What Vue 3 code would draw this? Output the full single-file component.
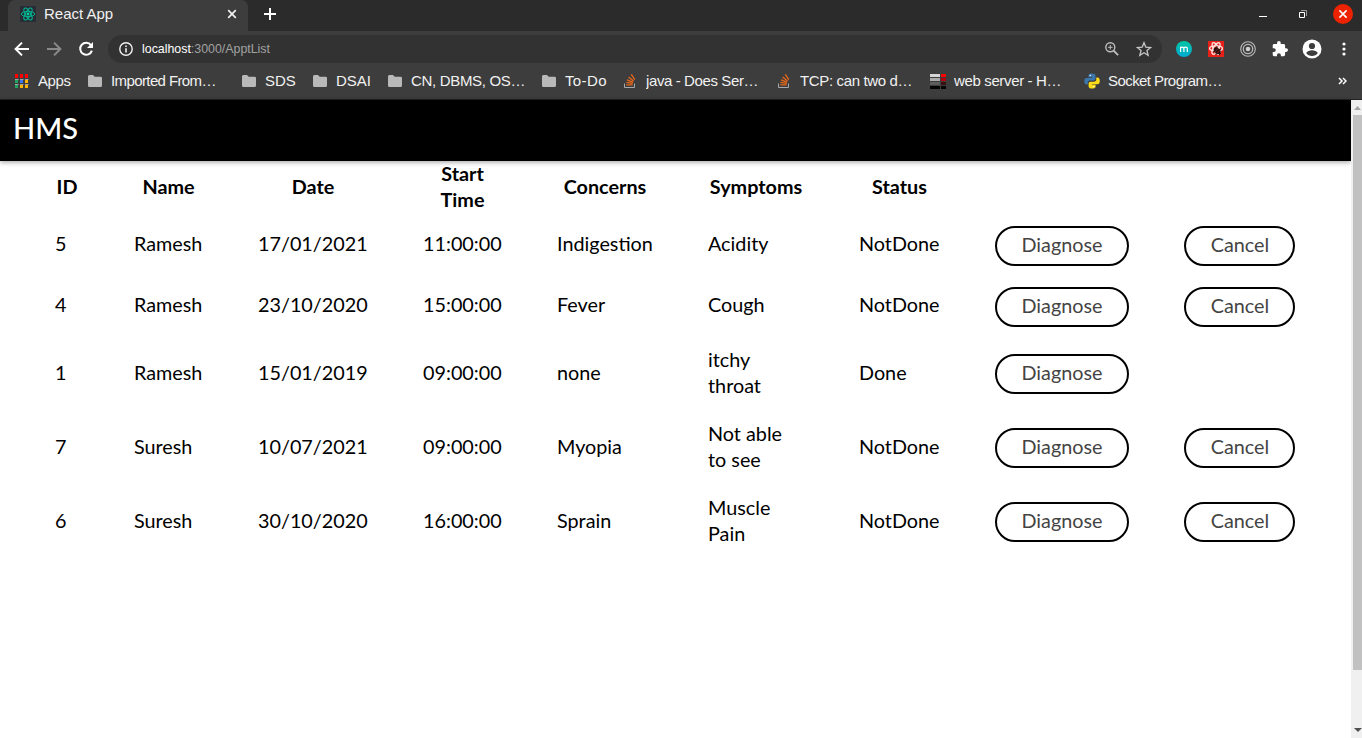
<script setup>
const bookmarks = [
  { icon: 'folder', text: 'Imported From…', w: 154, tl: 105.5 },
  { icon: 'folder', text: 'SDS', w: 71, tl: 30.8 },
  { icon: 'folder', text: 'DSAI', w: 75, tl: 35 },
  { icon: 'folder', text: 'CN, DBMS, OS…', w: 154, tl: 114.5 },
  { icon: 'folder', text: 'To-Do', w: 81, tl: 41.5 },
  { icon: 'stack', text: 'java - Does Ser…', w: 154, tl: 112.5 },
  { icon: 'stack', text: 'TCP: can two d…', w: 154, tl: 112.5 },
  { icon: 'bars', text: 'web server - H…', w: 154, tl: 107.5 },
  { icon: 'python', text: 'Socket Program…', w: 154, tl: 114.5 }
]
const headers = ['ID', 'Name', 'Date', 'Start Time', 'Concerns', 'Symptoms', 'Status', '', '']
const rows = [
  { cells: ['5', 'Ramesh', '17/01/2021', '11:00:00', 'Indigestion', 'Acidity', 'NotDone'], cancel: true },
  { cells: ['4', 'Ramesh', '23/10/2020', '15:00:00', 'Fever', 'Cough', 'NotDone'], cancel: true },
  { cells: ['1', 'Ramesh', '15/01/2019', '09:00:00', 'none', 'itchy throat', 'Done'], cancel: false, tall: true },
  { cells: ['7', 'Suresh', '10/07/2021', '09:00:00', 'Myopia', 'Not able to see', 'NotDone'], cancel: true, tall: true },
  { cells: ['6', 'Suresh', '30/10/2020', '16:00:00', 'Sprain', 'Muscle Pain', 'NotDone'], cancel: true, tall: true }
]
const appDots = ['#f00', '#f00', '#f00', '#1fa463', '#3b78f0', '#ffb300', '#1fa463', '#ffb300', '#ffb300']
</script>

<template>
  <div class="window">
    <header class="tabs">
      <div class="tab">
        <svg class="fav" width="16" height="16" viewBox="0 0 16 16">
          <rect width="16" height="16" fill="#282c34" />
          <g fill="none" stroke="#00b894" stroke-width="1">
            <ellipse cx="8" cy="8" rx="6.7" ry="2.6" />
            <ellipse cx="8" cy="8" rx="6.7" ry="2.6" transform="rotate(60 8 8)" />
            <ellipse cx="8" cy="8" rx="6.7" ry="2.6" transform="rotate(120 8 8)" />
          </g>
          <circle cx="8" cy="8" r="1.4" fill="#00d8a4" />
        </svg>
        <span class="tab-title">React App</span>
        <svg class="tab-close" width="10" height="10" viewBox="0 0 10 10"><path d="M1.2 1.2l7.6 7.6M8.8 1.2L1.2 8.8" stroke="#f1f1f1" stroke-width="1.7" /></svg>
      </div>
      <svg class="plus" width="12" height="12" viewBox="0 0 12 12"><path d="M6 0v12M0 6h12" stroke="#fff" stroke-width="2" /></svg>
      <div class="win-controls">
        <svg width="8" height="12" viewBox="0 0 8 12"><path d="M0 8.5h8" stroke="#fff" /></svg>
        <svg width="8" height="8" viewBox="0 0 8 8"><path d="M2 .5h5.5V6" fill="none" stroke="#999" /><path d="M.5 2.500h5v5h-5z" fill="none" stroke="#fff" /></svg>
        <svg width="20" height="20" viewBox="0 0 20 20"><circle cx="10" cy="10" r="10" fill="#ed2200" /><path d="M6.4 6.4l7.2 7.2M13.6 6.4l-7.2 7.2" stroke="#fff" stroke-width="1.6" /></svg>
      </div>
    </header>

    <div class="toolbar">
      <svg class="back" width="16" height="16" viewBox="0 0 16 16"><path d="M15 8H2.2M8 1.6L1.6 8 8 14.4" fill="none" stroke="#fff" stroke-width="2" /></svg>
      <svg class="forward" width="16" height="16" viewBox="0 0 16 16"><path d="M1 8h12.8M8 1.6L14.4 8 8 14.4" fill="none" stroke="#8a8a8a" stroke-width="2" /></svg>
      <svg class="reload" width="16" height="16" viewBox="0 0 16 16"><path d="M13 4.1A6 6 0 1 0 13.9 9.6" fill="none" stroke="#fff" stroke-width="2" /><path d="M15 1v6H9z" fill="#fff" /></svg>
      <div class="omnibox">
        <svg class="info" width="14" height="14" viewBox="0 0 14 14"><circle cx="7" cy="7" r="6.2" fill="none" stroke="#f1f1f1" stroke-width="1.4" /><path d="M7 6.2v4.4M7 3.4v1.6" stroke="#f1f1f1" stroke-width="1.6" /></svg>
        <svg class="url" width="132" height="18"><text x="0" y="13" font-size="13" textLength="128" lengthAdjust="spacingAndGlyphs"><tspan fill="#fff">localhost</tspan><tspan fill="#a2a2a2">:3000/ApptList</tspan></text></svg>
        <svg class="lens" width="14" height="14" viewBox="0 0 14 14"><circle cx="5.3" cy="5.3" r="4.5" fill="none" stroke="#bcbcbc" stroke-width="1.4" /><path d="M8.5 8.5l4.6 4.6" stroke="#bcbcbc" stroke-width="1.8" /><path d="M5.3 3v4.6M3 5.3h4.6" stroke="#bcbcbc" /></svg>
        <svg class="star" width="16" height="16" viewBox="0 0 14 14"><path d="M7 1.5l1.6 3.9 4.2.3-3.2 2.7 1 4.1L7 10.3l-3.6 2.2 1-4.1L1.2 5.7l4.2-.3z" fill="none" stroke="#c4c4c4" stroke-width="1.2" /></svg>
      </div>
      <svg class="ext-m" width="16" height="16" viewBox="0 0 16 16">
        <defs><linearGradient id="mg" x1="0" y1="0" x2="0" y2="1"><stop offset="0" stop-color="#00c5a2" /><stop offset="1" stop-color="#00a9d4" /></linearGradient></defs>
        <circle cx="8" cy="8" r="8" fill="url(#mg)" /><path d="M4.6 11V5.7M4.6 7.6q0-1.5 1.6-1.5T7.9 7.6V11M7.9 7.6q0-1.5 1.7-1.5t1.7 1.5V11" fill="none" stroke="#fff" stroke-width="1.2" />
      </svg>
      <svg class="ext-bug" width="16" height="16" viewBox="0 0 16 16">
        <rect width="16" height="16" fill="#e8201a" />
        <g fill="none" stroke="#ffdcd9" stroke-width="1.4"><ellipse cx="8" cy="7.5" rx="6.4" ry="2.6" /><ellipse cx="8" cy="7.5" rx="6.4" ry="2.6" transform="rotate(60 8 7.5)" /><ellipse cx="8" cy="7.5" rx="6.4" ry="2.6" transform="rotate(120 8 7.5)" /></g>
        <ellipse cx="9.2" cy="9.8" rx="4" ry="2.7" transform="rotate(42 9.2 9.8)" fill="#28120f" />
        <path d="M5 11l8-3M8 14l1-9M11 14l2-2" stroke="#28120f" /><path d="M7.2 10.5l3-3M9.3 12l2.5-2.5" stroke="#b52620" stroke-width=".7" />
      </svg>
      <svg class="ext-rings" width="16" height="16" viewBox="0 0 16 16"><circle cx="8" cy="8" r="7.3" fill="none" stroke="#bababa" stroke-width="1.1" /><circle cx="8" cy="8" r="4.7" fill="none" stroke="#bababa" stroke-width="1.3" /><circle cx="8" cy="8" r="2.3" fill="#d0d0d0" /></svg>
      <svg class="puzzle" width="16" height="16" viewBox="1 1 22 22"><path fill="#fff" d="M20.5 11H19V7c0-1.1-.9-2-2-2h-4V3.5a2.5 2.5 0 0 0-5 0V5H4c-1.1 0-2 .9-2 2v3.8h1.5a2.7 2.7 0 0 1 0 5.4H2V20c0 1.1.9 2 2 2h3.8v-1.5a2.7 2.7 0 0 1 5.4 0V22H17c1.100 0 2-.9 2-2v-4h1.500a2.500 2.500 0 0 0 0-5z" /></svg>
      <svg class="user" width="20" height="20" viewBox="0 0 20 20"><circle cx="10" cy="10" r="9.500" fill="#fff" /><circle cx="10" cy="7" r="3.100" fill="#3d3d3d" /><path d="M4.200 14c1-2 3.500-2.800 5.800-2.800s4.800.8 5.800 2.800a7 7 0 0 1-11.600 0z" fill="#3d3d3d" /></svg>
      <svg class="dots" width="4" height="14" viewBox="0 0 4 14"><circle cx="2" cy="2" r="1.600" fill="#fff" /><circle cx="2" cy="7" r="1.600" fill="#fff" /><circle cx="2" cy="12" r="1.600" fill="#fff" /></svg>
    </div>

    <nav class="bookmarks">
      <div class="mark apps">
        <div class="app-grid"><i v-for="(c, i) in appDots" :key="i" :style="{ background: c }"></i></div>
        <svg class="label" width="36" height="20"><text x="0" y="15" font-size="15" textLength="33">Apps</text></svg>
      </div>
      <div v-for="b in bookmarks" :key="b.text" class="mark" :style="{ width: b.w + 'px' }">
        <svg v-if="b.icon === 'folder'" class="icon" width="16" height="16" viewBox="0 0 16 16"><path d="M1 3.500Q1 2 2.400 2H6l1.700 1.700h5.900Q15 3.700 15 5v7.500Q15 14 13.600 14H2.400Q1 14 1 12.500z" fill="#b9b9b9" /></svg>
        <svg v-else-if="b.icon === 'stack'" class="icon" width="16" height="16" viewBox="0 0 16 16">
          <path d="M2.500 10.500v4h10v-4" fill="none" stroke="#a7a9ac" />
          <path d="M4.300 12.500h6.400M4.400 10l6.300 1.100M5 7.500l6 2.400M6.600 4.700l5 4M9.300 2.100l3.500 5.300" transform="translate(0 -.7)" stroke="#e8681a" stroke-width="1.300" />
        </svg>
        <svg v-else-if="b.icon === 'bars'" class="icon" width="16" height="16" viewBox="0 -1 16 16">
          <path d="M0 0h10v3H0z" fill="#d6d6d6" /><path d="M0 4h10v3H0z" fill="#aaa" /><path d="M0 8h10v3H0z" fill="#5d5d5d" /><path d="M0 12h10v3H0zM11 12h5v3h-5z" fill="#050505" />
          <path d="M11 0h5v3h-5z" fill="#f00" /><path d="M11 4h5v3h-5z" fill="#b2000b" /><path d="M11 8h5v3h-5z" fill="#3b1013" />
        </svg>
        <svg v-else class="icon" width="16" height="16" viewBox="0 0 16 16">
          <path fill="#3b77ad" d="M7.900.5C4.700.5 4.500 1.800 4.500 2.800v1.500h3.700v.6H2.600C.9 4.900.3 6.400.3 8.200s.8 3.300 2.200 3.300h1.300V9.600c0-1.300 1-2.200 2.300-2.200h3.500c1.100 0 1.900-.8 1.900-1.900V2.800C11.500 1.300 10.200.5 7.900.5z" />
          <path fill="#ffdc1a" d="M8.200 15.600c3.200 0 3.400-1.300 3.400-2.300v-1.500H7.900v-.6h5.600c1.700 0 2.300-1.500 2.300-3.300s-.8-3.300-2.200-3.300h-1.300v1.900c0 1.300-1 2.200-2.300 2.200H6.500c-1.100 0-1.900.8-1.900 1.900v2.700c0 1.500 1.300 2.300 3.600 2.300z" />
          <circle cx="6.300" cy="2.500" r=".7" fill="#fff" /><circle cx="9.800" cy="13.600" r=".7" fill="#fff" />
        </svg>
        <svg class="label" :width="b.tl + 4" height="20"><text x="0" y="15" font-size="15" :textLength="b.tl">{{ b.text }}</text></svg>
      </div>
      <svg class="more" width="9" height="8" viewBox="0 0 9 8"><path d="M1 1l3 3-3 3M5 1l3 3-3 3" fill="none" stroke="#fff" stroke-width="1.500" /></svg>
    </nav>

    <main class="viewport">
      <section class="page">
        <div class="brand">HMS</div>
        <div class="table">
          <div class="row head"><div v-for="(h, i) in headers" :key="i" class="cell"><b>{{ h }}</b></div></div>
          <div v-for="r in rows" :key="r.cells[0]" class="row" :class="{ tall: r.tall }">
            <div v-for="(c, i) in r.cells" :key="i" class="cell" :class="{ wrap: i === 5 }">{{ c }}</div>
            <div class="action"><button>Diagnose</button></div>
            <div class="action"><button v-if="r.cancel" class="cancel">Cancel</button></div>
          </div>
        </div>
      </section>
      <aside class="scrollbar">
        <svg width="11" height="15" viewBox="0 0 11 15"><path d="M3 10h7L6.500 6z" fill="#a3a3a3" /></svg>
        <div class="thumb"></div>
        <svg class="down" width="11" height="15" viewBox="0 0 11 15"><path d="M3 5h8L7 9z" fill="#505050" /></svg>
      </aside>
    </main>
  </div>
</template>

<style>
body { margin: 0; overflow: hidden; background: #fff; }
</style>

<style scoped>
* { box-sizing: border-box; }
svg { display: block; flex: none; }
.window { width: 1362px; height: 738px; display: flex; flex-direction: column; overflow: hidden; font-family: "Liberation Sans", Arial, sans-serif; }
.tabs { height: 31px; flex: none; background: #2b2b2b; display: flex; align-items: flex-start; padding-left: 8px; }
.tab { width: 240px; height: 31px; background: #3d3d3d; border-radius: 7px 7px 0 0; display: flex; align-items: center; padding: 0 11px 3px 12px; }
.tab-title { flex: 1; margin-left: 8px; color: #f1f1f1; font-size: 15px; line-height: 20px; }
.plus { margin: 8px 0 0 16px; }
.win-controls { margin-left: auto; padding: 4px 9px 0 0; display: flex; align-items: center; }
.win-controls svg + svg { margin-left: 32px; }
.win-controls svg:last-child { margin-left: 26px; }
.toolbar { height: 36px; flex: none; background: #3d3d3d; display: flex; align-items: center; padding-left: 14px; }
.forward, .reload { margin-left: 16px; }
.omnibox { width: 1054px; height: 28px; margin-left: 14px; border-radius: 14px; background: #323232; display: flex; align-items: center; padding: 0 10px 0 11px; }
.url { margin-left: 9px; }
.lens { margin-left: auto; }
.star { margin-left: 17px; }
.ext-m { margin-left: 14px; }
.ext-bug, .ext-rings, .puzzle { margin-left: 16px; }
.user { margin-left: 14px; }
.dots { margin-left: 20px; }
.bookmarks { height: 33px; flex: none; background: #3d3d3d; border-bottom: 1px solid #242424; display: flex; align-items: center; padding: 0 0 4px 14px; }
.mark { flex: none; display: flex; align-items: center; }
.apps { width: 73px; }
.app-grid { width: 16px; display: grid; grid-template-columns: repeat(3, 4px); gap: 1px; padding-left: 1px; }
.app-grid i { height: 4px; border-top: 1px solid #a2a2a2; border-right: 1px solid #3d3d3d; }
.app-grid i:nth-child(-n + 3) { border-top: 0; }
.label { margin-left: 8px; }
.label text { fill: #f1f1f1; }
.more { margin: 0 15px 0 auto; }
.viewport { flex: 1; min-height: 0; display: flex; }
.page { width: 1351px; background: #fff; font-family: Lato, sans-serif; color: #000; }
.brand { height: 61px; padding: 8px 0 0 13px; background: #000; color: #fff; font-size: 29px; font-weight: 500; line-height: 40px; box-shadow: 0 1px 5px rgba(0, 0, 0, .4); }
.table { padding-left: 55px; font-size: 19.8px; line-height: 26px; }
.row { height: 61px; display: grid; grid-template-columns: 79px 124px 165px 134px 151px 151px 136px 189px 111px; align-items: center; }
.row.tall { height: 74px; }
.row.head { height: 55px; padding-bottom: 5px; align-content: center; }
.cell { white-space: nowrap; padding-bottom: 8px; }
.cell.wrap { white-space: normal; padding-right: 56px; }
.tall .cell { padding-bottom: 6px; }
.head .cell { padding: 0 55px 0 0; text-align: center; white-space: normal; }
.action { height: 40px; margin-bottom: 1px; }
.tall .action { margin-bottom: 2px; }
button { width: 134px; height: 40px; display: block; padding: 0 0 5px; border: 2px solid #000; border-radius: 20px; background: #fff; color: #444; font: 19.8px/24px Lato, sans-serif; }
.cancel { width: 111px; padding-left: 1px; }
.scrollbar { width: 11px; background: #f0f0f0; display: flex; flex-direction: column; }
.thumb { height: 555px; width: 9px; margin-left: 2px; background: #c1c1c1; }
.down { margin-top: auto; }
</style>
